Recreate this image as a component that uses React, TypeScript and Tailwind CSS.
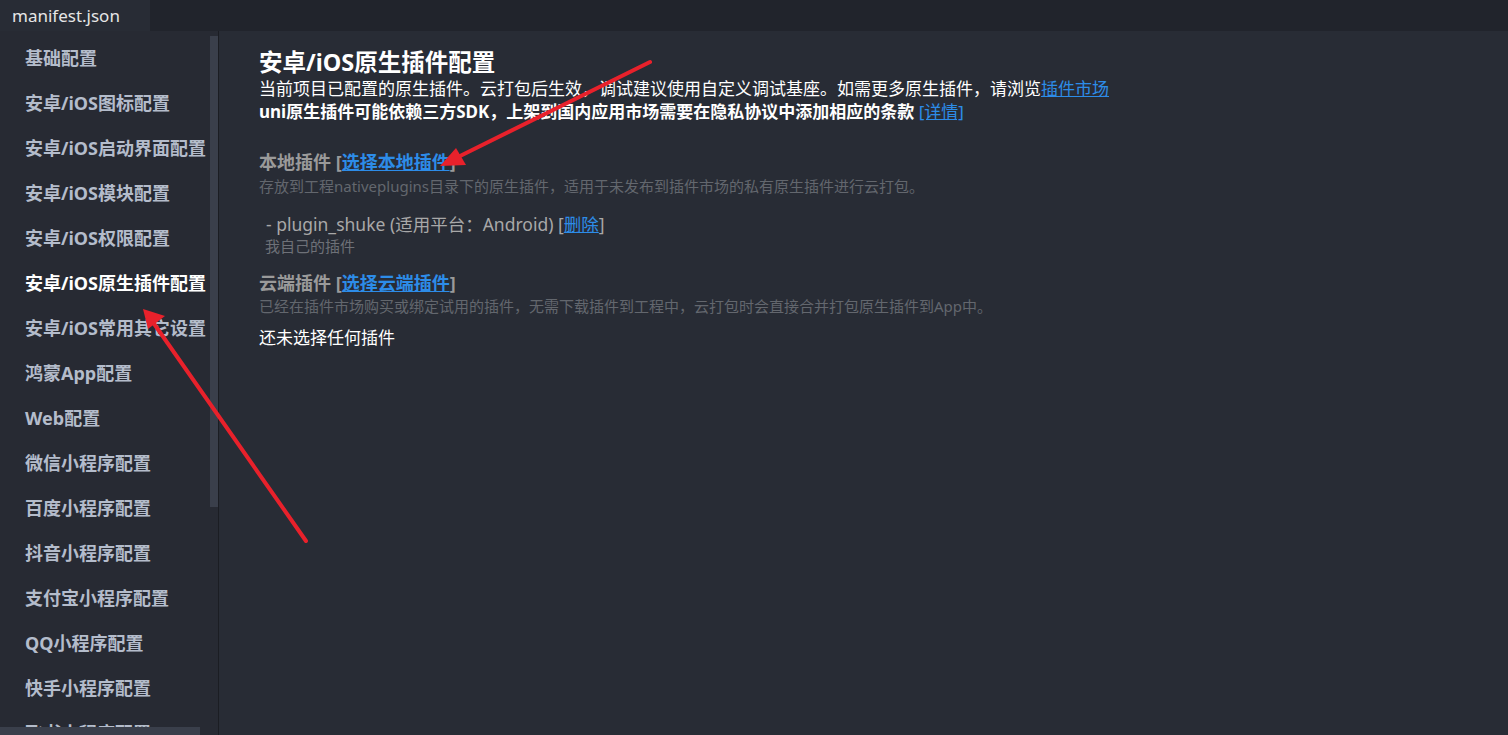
import React from "react";

const items = [
  "基础配置",
  "安卓/iOS图标配置",
  "安卓/iOS启动界面配置",
  "安卓/iOS模块配置",
  "安卓/iOS权限配置",
  "安卓/iOS原生插件配置",
  "安卓/iOS常用其它设置",
  "鸿蒙App配置",
  "Web配置",
  "微信小程序配置",
  "百度小程序配置",
  "抖音小程序配置",
  "支付宝小程序配置",
  "QQ小程序配置",
  "快手小程序配置",
  "飞书小程序配置",
];

const font = { fontFamily: '"Noto Sans", "Noto Sans CJK SC", sans-serif' };

export default function App() {
  return (
    <div
      className="relative w-[1508px] h-[735px] overflow-hidden bg-[#282c35] flex flex-col"
      style={font}
    >
      {/* tab bar */}
      <div className="h-[31px] bg-[#21242c] flex shrink-0">
        <div className="w-[150px] h-full bg-[#282c35] flex items-center pl-[12px] text-[17px] text-[#e6e6e6]">
          manifest.json
        </div>
      </div>
      <div className="flex flex-1 min-h-0">
        {/* sidebar */}
        <div className="relative w-[219px] shrink-0 bg-[#272a33] overflow-hidden border-r border-[#1b1d23]">
          <div className="pt-[5px] pl-[25px]">
            {items.map((t, i) => (
              <div
                key={t}
                className={
                  "h-[45px] flex items-center text-[18px] font-bold whitespace-nowrap " +
                  (i === 5 ? "text-white" : "text-[#b4bccb]")
                }
              >
                {t}
              </div>
            ))}
          </div>
          <div className="absolute right-0 top-[5px] w-[8px] h-[471px] bg-[#3a3f4b]" />
          <div className="absolute left-0 bottom-0 w-[200px] h-[8px] bg-[#3a3f4b]" />
        </div>
        {/* content */}
        <div className="flex-1 pl-[40px] pt-[17px] text-white whitespace-nowrap">
          <div className="text-[23.5px] font-bold leading-[28px]">安卓/iOS原生插件配置</div>
          <div className="text-[17px] leading-[26px]">
            当前项目已配置的原生插件。云打包后生效，调试建议使用自定义调试基座。如需更多原生插件，请浏览
            <span className="text-[#2d8ce8] underline">插件市场</span>
          </div>
          <div className="text-[17px] font-bold leading-[20px]">
            uni原生插件可能依赖三方SDK，上架到国内应用市场需要在隐私协议中添加相应的条款{" "}
            <span className="text-[#2d8ce8] underline font-normal">[详情]</span>
          </div>

          <div className="mt-[28px] text-[18px] font-bold leading-[24px] text-[#9a9a9a]">
            本地插件 [<span className="text-[#2d8ce8] underline">选择本地插件</span>]
          </div>
          <div className="text-[15px] leading-[24px] text-[#63676e]">
            存放到工程nativeplugins目录下的原生插件，适用于未发布到插件市场的私有原生插件进行云打包。
          </div>
          <div className="mt-[14px] pl-[7px] text-[17.5px] leading-[24px] text-[#a8a8a8]">
            - plugin_shuke (适用平台：Android) [<span className="text-[#2d8ce8] underline">删除</span>]
          </div>
          <div className="pl-[6px] text-[15px] leading-[20px] text-[#6e7178]">我自己的插件</div>

          <div className="mt-[15px] text-[18px] font-bold leading-[24px] text-[#9a9a9a]">
            云端插件 [<span className="text-[#2d8ce8] underline">选择云端插件</span>]
          </div>
          <div className="text-[15px] leading-[22px] text-[#63676e]">
            已经在插件市场购买或绑定试用的插件，无需下载插件到工程中，云打包时会直接合并打包原生插件到App中。
          </div>
          <div className="mt-[9px] text-[17px] leading-[24px] text-white">还未选择任何插件</div>
        </div>
      </div>

      {/* red annotation arrows */}
      <svg className="absolute left-0 top-0 pointer-events-none" width="1508" height="735">
        <g stroke="#e8212b" strokeWidth="4" strokeLinecap="round" fill="none">
          <line x1="650" y1="62" x2="452" y2="160" />
          <line x1="306" y1="541" x2="150" y2="318" />
        </g>
        <polygon points="440,166 456,148 466,165" fill="#e8212b" />
        <polygon points="143,309 165,316 148,329" fill="#e8212b" />
      </svg>
    </div>
  );
}
